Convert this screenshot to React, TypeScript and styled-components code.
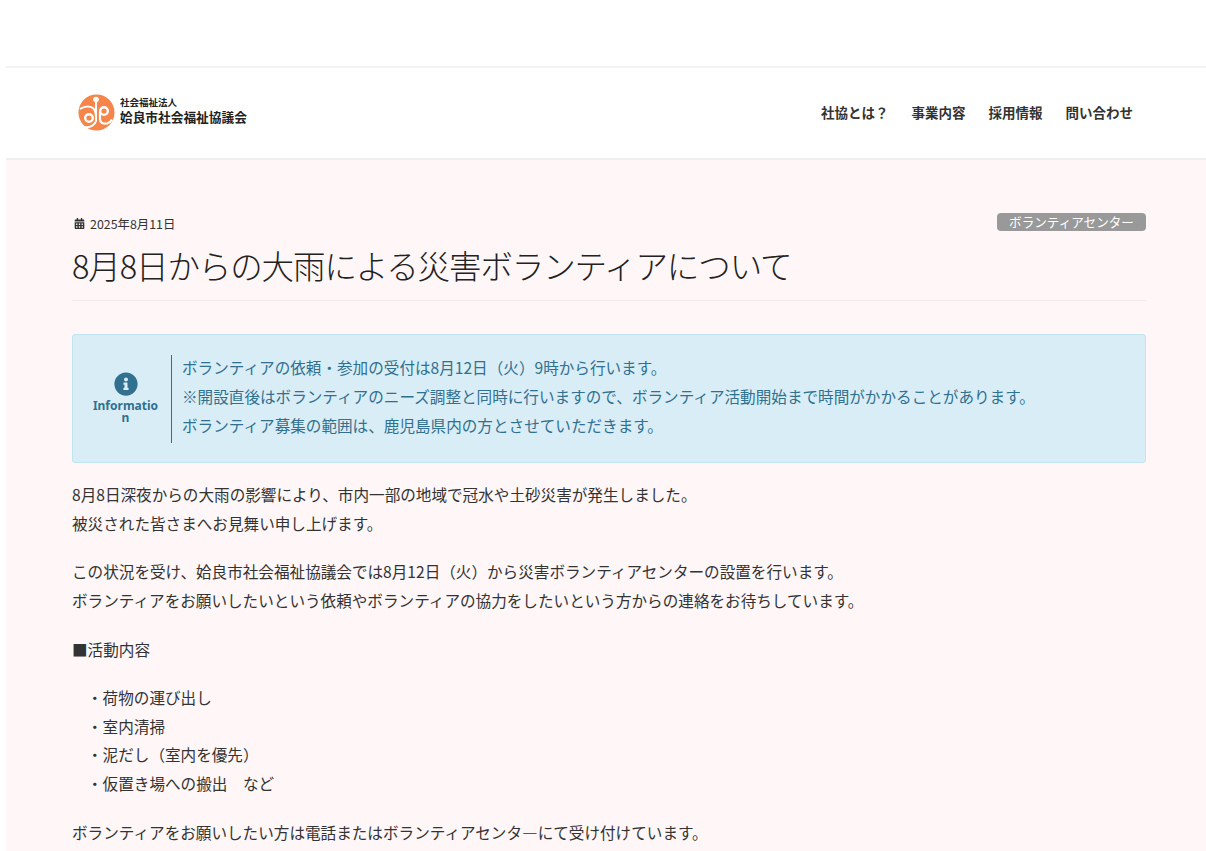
import styled, { createGlobalStyle } from 'styled-components'
import { FaCalendarAlt, FaInfoCircle } from 'react-icons/fa'

const GlobalStyle = createGlobalStyle`
  html, body {
    margin: 0;
    padding: 0;
    height: 851px;
    overflow: hidden;
    background-color: #ffffff;
  }
  body {
    font-family: "Noto Sans CJK JP", "Noto Sans", sans-serif;
    color: #333333;
  }
`

const Page = styled.div`
  height: 851px;
  box-sizing: border-box;
  overflow: hidden;
  padding: 66px 0 0 6px;
`

const Header = styled.header`
  height: 90px;
  background-color: #ffffff;
  border-top: 2px solid #f3f3f3;
  border-bottom: 2px solid #f1eeee;
  display: flex;
  align-items: center;
  justify-content: space-between;
  padding: 0 73px 0 72px;
`

const Logo = styled.div`
  display: flex;
  align-items: center;
  gap: 5px;
  margin-bottom: 1px;
`

const LogoText = styled.div`
  display: flex;
  flex-direction: column;
  margin-bottom: 3px;
  color: #222222;
  font-weight: 700;
`

const LogoSmall = styled.span`
  font-size: 9.5px;
  line-height: 12px;
`

const LogoLarge = styled.span`
  font-size: 12.7px;
  line-height: 18px;
`

const Nav = styled.nav`
  display: flex;
  gap: 23px;
  margin-bottom: 2px;
`

const NavItem = styled.a`
  font-size: 13.5px;
  font-weight: 700;
  line-height: 20px;
  color: #333333;
`

const Content = styled.main`
  background-color: #fef6f7;
  padding: 52px 60px 0 66px;
  height: 641px;
  overflow: hidden;
`

const Meta = styled.div`
  display: flex;
  align-items: center;
  justify-content: space-between;
  height: 18px;
`

const DateLabel = styled.span`
  display: flex;
  align-items: center;
  gap: 5px;
  margin: 5px 0 0 2px;
  font-size: 12.4px;
  color: #333333;
`

const Badge = styled.span`
  width: 149px;
  height: 18px;
  margin-top: 1px;
  border-radius: 4px;
  background-color: #999999;
  color: #ffffff;
  font-size: 12.6px;
  line-height: 17px;
  text-align: center;
`

const Title = styled.h1`
  margin: 10px 0 0;
  padding-bottom: 10px;
  border-bottom: 1px solid #f3eaeb;
  font-size: 32.5px;
  font-weight: 300;
  letter-spacing: -1.1px;
  line-height: 50px;
  color: #222222;
`

const Notice = styled.section`
  display: flex;
  align-items: stretch;
  margin-top: 33px;
  padding: 20px 0 19px;
  border: 1px solid #bee5f0;
  border-radius: 3px;
  background-color: #d9edf7;
  color: #31708f;
`

const NoticeLabel = styled.div`
  width: 99px;
  flex-shrink: 0;
  display: flex;
  flex-direction: column;
  align-items: center;
  justify-content: center;
  padding: 0 0 2px 7px;
  border-right: 1px solid #31708f;
  box-sizing: border-box;
`

const NoticeTitle = styled.span`
  width: 66px;
  margin-top: 4px;
  font-family: "Noto Sans", sans-serif;
  font-size: 12px;
  font-weight: 700;
  line-height: 12px;
  text-align: center;
  word-break: break-all;
`

const NoticeBody = styled.div`
  margin-top: -2px;
  padding: 0 0 4px 10px;
  font-size: 15.6px;
  line-height: 28.8px;
`

const Paragraph = styled.p`
  margin: 0 0 19.5px;
  font-size: 15.6px;
  line-height: 28.8px;
  color: #333333;
`

const Lead = styled(Paragraph)`
  margin-top: 17px;
`

const ListBlock = styled(Paragraph)`
  padding-left: 15px;
`

export default function App() {
  return (
    <>
      <GlobalStyle />
      <Page>
        <Header>
          <Logo>
            <svg width="37" height="37" viewBox="0 0 37 37" aria-hidden="true">
              <circle cx="18.5" cy="18.5" r="18" fill="#f58549" />
              <circle cx="18" cy="5.500" r="2.800" fill="#fff" />
              <path d="M18 8v19c-1 4-6 7-11 6" stroke="#fff" strokeWidth="2" fill="none" />
              <path d="M2 15c4-3 10-3 13-1 2 2 3 5 3 9" stroke="#fff" strokeWidth="2" fill="none" />
              <circle cx="11" cy="24" r="3.800" fill="none" stroke="#fff" strokeWidth="2.400" />
              <circle cx="26" cy="17" r="3.800" fill="none" stroke="#fff" strokeWidth="2.400" />
              <path d="M22 18v7c0 4 3 5 7 4.500 2-.5 4-2 5-4" stroke="#fff" strokeWidth="2.200" fill="none" />
            </svg>
            <LogoText>
              <LogoSmall>社会福祉法人</LogoSmall>
              <LogoLarge>姶良市社会福祉協議会</LogoLarge>
            </LogoText>
          </Logo>
          <Nav>
            <NavItem>社協とは？</NavItem>
            <NavItem>事業内容</NavItem>
            <NavItem>採用情報</NavItem>
            <NavItem>問い合わせ</NavItem>
          </Nav>
        </Header>
        <Content>
          <Meta>
            <DateLabel>
              <FaCalendarAlt size={11} />
              2025年8月11日
            </DateLabel>
            <Badge>ボランティアセンター</Badge>
          </Meta>
          <Title>8月8日からの大雨による災害ボランティアについて</Title>
          <Notice>
            <NoticeLabel>
              <FaInfoCircle size={24} />
              <NoticeTitle>Information</NoticeTitle>
            </NoticeLabel>
            <NoticeBody>
              ボランティアの依頼・参加の受付は8月12日（火）9時から行います。
              <br />
              ※開設直後はボランティアのニーズ調整と同時に行いますので、ボランティア活動開始まで時間がかかることがあります。
              <br />
              ボランティア募集の範囲は、鹿児島県内の方とさせていただきます。
            </NoticeBody>
          </Notice>
          <Lead>
            8月8日深夜からの大雨の影響により、市内一部の地域で冠水や土砂災害が発生しました。
            <br />
            被災された皆さまへお見舞い申し上げます。
          </Lead>
          <Paragraph>
            この状況を受け、姶良市社会福祉協議会では8月12日（火）から災害ボランティアセンターの設置を行います。
            <br />
            ボランティアをお願いしたいという依頼やボランティアの協力をしたいという方からの連絡をお待ちしています。
          </Paragraph>
          <Paragraph>■活動内容</Paragraph>
          <ListBlock>
            ・荷物の運び出し
            <br />
            ・室内清掃
            <br />
            ・泥だし（室内を優先）
            <br />
            ・仮置き場への搬出　など
          </ListBlock>
          <Paragraph>ボランティアをお願いしたい方は電話またはボランティアセンタ―にて受け付けています。</Paragraph>
        </Content>
      </Page>
    </>
  )
}
